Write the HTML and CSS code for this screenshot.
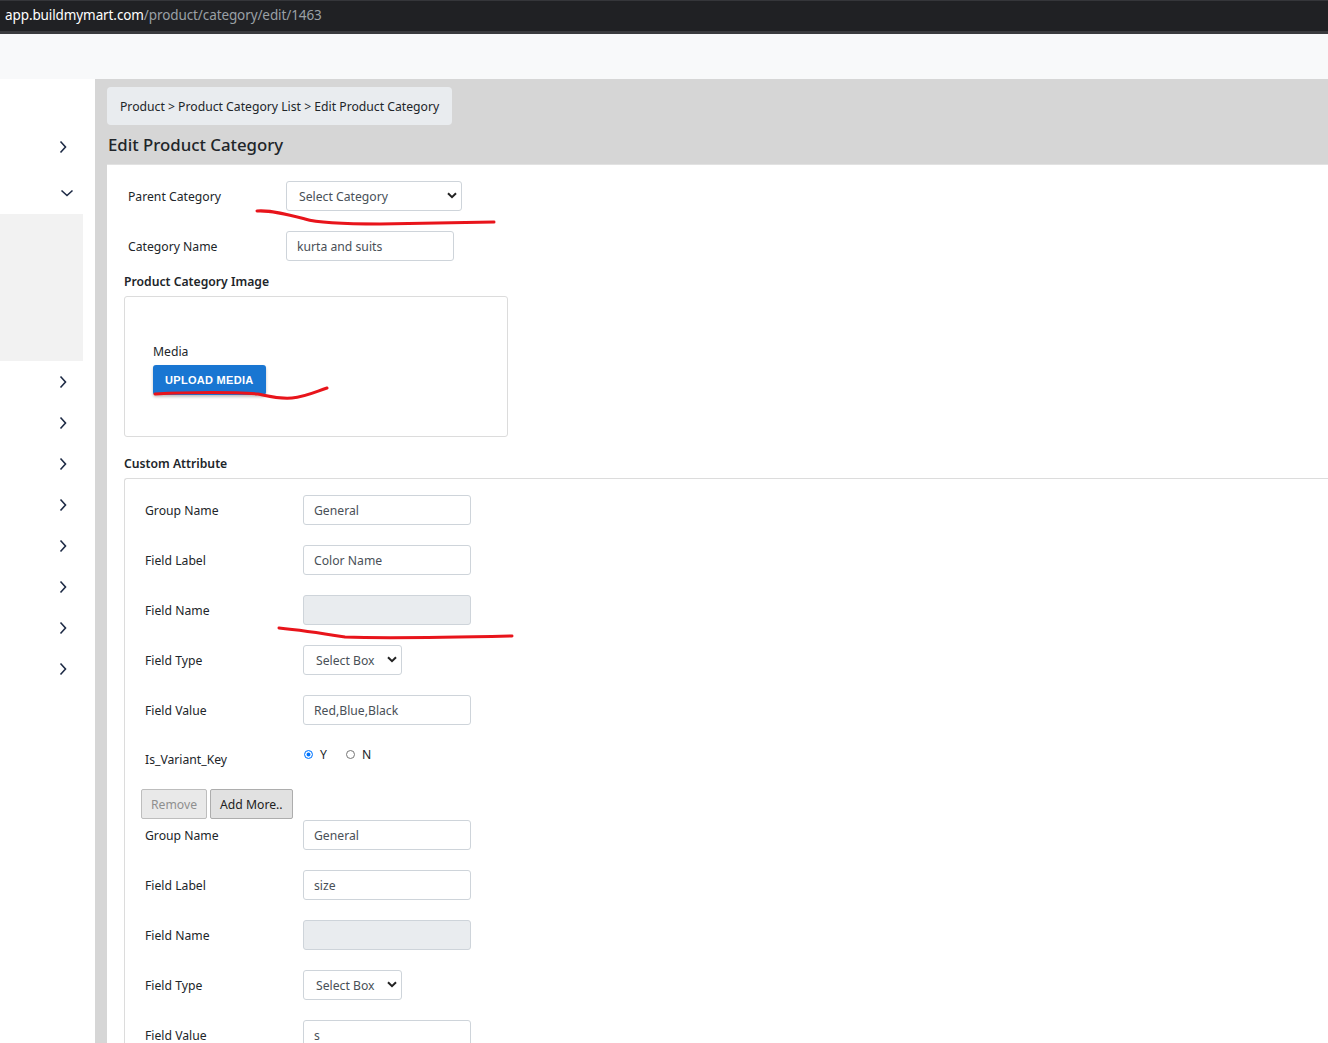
FILE: index.html
```html
<!DOCTYPE html>
<html lang="en">
<head>
    <meta charset="UTF-8">
    <meta name="viewport" content="width=device-width, initial-scale=1.0">
    <title>Edit Product Category</title>
    <link rel="stylesheet" href="styles.css">
</head>
<body>
    <div class="browser-bar">
        <span class="host">app.buildmymart.com</span><span class="path">/product/category/edit/1463</span>
    </div>
    <header class="topnav"></header>

    <div class="layout">
        <aside class="sidebar">
            <div class="menu-item"><svg class="chev" width="10" height="14" viewBox="0 0 10 14"><path d="M2.5 1.5 L7.5 7 L2.5 12.5"/></svg></div>
            <div class="menu-item open"><svg class="chev" width="14" height="10" viewBox="0 0 14 10"><path d="M1.5 2.5 L7 7.5 L12.5 2.5"/></svg></div>
            <div class="submenu"></div>
            <div class="menu-item"><svg class="chev" width="10" height="14" viewBox="0 0 10 14"><path d="M2.5 1.5 L7.5 7 L2.5 12.5"/></svg></div>
            <div class="menu-item"><svg class="chev" width="10" height="14" viewBox="0 0 10 14"><path d="M2.5 1.5 L7.5 7 L2.5 12.5"/></svg></div>
            <div class="menu-item"><svg class="chev" width="10" height="14" viewBox="0 0 10 14"><path d="M2.5 1.5 L7.5 7 L2.5 12.5"/></svg></div>
            <div class="menu-item"><svg class="chev" width="10" height="14" viewBox="0 0 10 14"><path d="M2.5 1.5 L7.5 7 L2.5 12.5"/></svg></div>
            <div class="menu-item"><svg class="chev" width="10" height="14" viewBox="0 0 10 14"><path d="M2.5 1.5 L7.5 7 L2.5 12.5"/></svg></div>
            <div class="menu-item"><svg class="chev" width="10" height="14" viewBox="0 0 10 14"><path d="M2.5 1.5 L7.5 7 L2.5 12.5"/></svg></div>
            <div class="menu-item"><svg class="chev" width="10" height="14" viewBox="0 0 10 14"><path d="M2.5 1.5 L7.5 7 L2.5 12.5"/></svg></div>
            <div class="menu-item"><svg class="chev" width="10" height="14" viewBox="0 0 10 14"><path d="M2.5 1.5 L7.5 7 L2.5 12.5"/></svg></div>
        </aside>

        <main class="main">
            <div class="page-head">
                <nav class="crumbs">Product &gt; Product Category List &gt; Edit Product Category</nav>
                <h1>Edit Product Category</h1>
            </div>

            <div class="content">
                <form>
                    <div class="form-row">
                        <label>Parent Category</label>
                        <div class="select-wrap wide">
                            <select><option>Select Category</option></select>
                            <svg class="select-arrow" width="10" height="7" viewBox="0 0 10 7"><path d="M1 1.2 L5 5.2 L9 1.2"/></svg>
                        </div>
                    </div>
                    <div class="form-row last">
                        <label>Category Name</label>
                        <input type="text" class="name-input" value="kurta and suits">
                    </div>

                    <h3 class="section-title">Product Category Image</h3>
                    <div class="media-box">
                        <div class="media-label">Media</div>
                        <button type="button" class="btn-upload">UPLOAD MEDIA</button>
                    </div>

                    <h3 class="section-title attr-title">Custom Attribute</h3>
                    <div class="attr-box">
                        <div class="attr-row">
                            <label>Group Name</label>
                            <input type="text" value="General">
                        </div>
                        <div class="attr-row">
                            <label>Field Label</label>
                            <input type="text" value="Color Name">
                        </div>
                        <div class="attr-row">
                            <label>Field Name</label>
                            <input type="text" disabled>
                        </div>
                        <div class="attr-row">
                            <label>Field Type</label>
                            <div class="select-wrap small">
                                <select><option>Select Box</option></select>
                                <svg class="select-arrow" width="10" height="7" viewBox="0 0 10 7"><path d="M1 1.2 L5 5.2 L9 1.2"/></svg>
                            </div>
                        </div>
                        <div class="attr-row">
                            <label>Field Value</label>
                            <input type="text" value="Red,Blue,Black">
                        </div>
                        <div class="attr-row radio-row">
                            <label>Is_Variant_Key</label>
                            <div class="radios">
                                <span class="radio checked"></span><span class="radio-text">Y</span>
                                <span class="radio"></span><span class="radio-text">N</span>
                            </div>
                        </div>
                        <div class="attr-actions">
                            <button type="button" class="btn-gray" disabled>Remove</button>
                            <button type="button" class="btn-gray btn-more">Add More..</button>
                        </div>

                        <div class="attr-row">
                            <label>Group Name</label>
                            <input type="text" value="General">
                        </div>
                        <div class="attr-row">
                            <label>Field Label</label>
                            <input type="text" value="size">
                        </div>
                        <div class="attr-row">
                            <label>Field Name</label>
                            <input type="text" disabled>
                        </div>
                        <div class="attr-row">
                            <label>Field Type</label>
                            <div class="select-wrap small">
                                <select><option>Select Box</option></select>
                                <svg class="select-arrow" width="10" height="7" viewBox="0 0 10 7"><path d="M1 1.2 L5 5.2 L9 1.2"/></svg>
                            </div>
                        </div>
                        <div class="attr-row">
                            <label>Field Value</label>
                            <input type="text" value="s">
                        </div>
                    </div>
                </form>
            </div>
        </main>
    </div>

    <!-- red pen marks drawn over the screenshot -->
    <svg class="marks" width="1328" height="1043" viewBox="0 0 1328 1043">
        <path d="M257 211 C 272 210, 290 215, 305 219 C 318 223, 340 224, 380 224 L 494 222"/>
        <path d="M155 394 C 190 392, 235 392, 258 394 C 268 396, 276 399, 292 398 C 305 397, 315 392, 327 388"/>
        <path d="M279 628 C 300 630, 320 633, 345 637 C 370 638, 420 638, 512 636"/>
    </svg>
</body>
</html>
```

FILE: styles.css
```css
body {
    margin: 0;
    font-family: "Noto Sans", "Open Sans", sans-serif;
    font-size: 12.2px;
    color: #212529;
    background: #ffffff;
    width: 1328px;
    height: 1043px;
    overflow: hidden;
    position: relative;
}

.browser-bar {
    height: 34px;
    background: #202124;
    border-top: 1px solid #35363a;
    border-bottom: 3px solid #3a3b3e;
    box-sizing: border-box;
    display: flex;
    align-items: center;
    padding: 0 0 3px 5px;
    font-size: 13.5px;
    letter-spacing: -0.1px;
}

.host {
    color: #ffffff;
}

.path {
    color: #9aa0a6;
}

.topnav {
    height: 45px;
    background: #f8f9fa;
}

.layout {
    display: flex;
    min-height: 964px;
}

.sidebar {
    width: 95px;
    flex-shrink: 0;
    background: #ffffff;
    padding-top: 47px;
}

.menu-item {
    height: 41px;
    display: flex;
    align-items: center;
    padding-left: 58px;
}

.menu-item.open {
    height: 47px;
    padding-left: 60px;
    padding-top: 4px;
    box-sizing: border-box;
}

.chev path {
    fill: none;
    stroke: #1d2a45;
    stroke-width: 1.6;
}

.submenu {
    width: 83px;
    height: 147px;
    background: #f2f2f2;
}

.main {
    flex: 1;
    background: #d6d6d6;
    padding-left: 12px;
    display: flex;
    flex-direction: column;
}

.page-head {
    flex-shrink: 0;
    padding-top: 8px;
    height: 86px;
    box-sizing: border-box;
    border-bottom: 1px solid #e2e2e2;
}

.crumbs {
    display: inline-block;
    background: #e9ecef;
    border-radius: 4px;
    padding: 0 13px;
    height: 38px;
    line-height: 39px;
    color: #212529;
}

h1 {
    margin: 7px 0 0 1px;
    font-size: 16.8px;
    font-weight: 500;
    line-height: 26px;
    color: #212529;
}

.content {
    flex: 1;
    background: #ffffff;
    padding: 16px 0 0 17px;
}

.form-row {
    display: flex;
    align-items: center;
    margin-bottom: 20px;
    padding-left: 4px;
}

.form-row.last {
    margin-bottom: 12px;
}

.form-row label,
.attr-row label {
    width: 158px;
    flex-shrink: 0;
}

input[type="text"],
select {
    height: 30px;
    box-sizing: border-box;
    border: 1px solid #ced4da;
    border-radius: 3px;
    background: #ffffff;
    font-family: inherit;
    font-size: 12.2px;
    color: #495057;
    padding: 0 10px;
    outline: none;
}

input[type="text"]:disabled {
    background: #e9ecef;
}

.name-input {
    width: 168px;
}

.select-wrap {
    position: relative;
}

.select-wrap select {
    appearance: none;
    -webkit-appearance: none;
    width: 100%;
    padding-left: 12px;
}

.select-wrap.wide {
    width: 176px;
}

.select-wrap.small {
    width: 99px;
}

.select-arrow {
    position: absolute;
    right: 5px;
    top: 11px;
    pointer-events: none;
}

.select-arrow path {
    fill: none;
    stroke: #222;
    stroke-width: 2;
}

.section-title {
    margin: 0 0 5px;
    font-size: 12.2px;
    font-weight: 600;
    line-height: 18px;
}

.media-box {
    width: 384px;
    height: 141px;
    box-sizing: border-box;
    border: 1px solid #dcdcdc;
    border-radius: 3px;
    padding: 45px 28px 0;
}

.media-label {
    line-height: 20px;
    margin-bottom: 3px;
}

.btn-upload {
    height: 30px;
    padding: 0 12px;
    border: none;
    border-radius: 3px;
    background: #1976d2;
    color: #ffffff;
    font-family: "Liberation Sans", Arial, sans-serif;
    font-weight: bold;
    font-size: 11px;
    letter-spacing: 0.3px;
    box-shadow: 0 2px 3px rgba(0, 0, 0, 0.25);
}

.attr-title {
    margin-top: 18px;
    margin-bottom: 5px;
}

.attr-box {
    border: 1px solid #dcdcdc;
    border-right: none;
    border-bottom: none;
    border-radius: 3px 0 0 0;
    padding: 16px 0 0 16px;
}

.attr-row {
    display: flex;
    align-items: center;
    margin-bottom: 20px;
    padding-left: 4px;
}

.attr-row input[type="text"] {
    width: 168px;
}

.radio-row {
    align-items: flex-start;
    height: 24px;
}

.radio-row label {
    padding-top: 6px;
}

.radios {
    display: flex;
    align-items: center;
    margin-top: 1px;
}

.radio {
    width: 9px;
    height: 9px;
    border: 1px solid #767676;
    border-radius: 50%;
    box-sizing: border-box;
    margin-left: 1px;
}

.radio.checked {
    border: 1px solid #0075ff;
    background: #ffffff;
    box-shadow: inset 0 0 0 1.5px #ffffff, inset 0 0 0 5px #0075ff;
}

.radio-text {
    margin: 0 18px 0 7px;
}

.attr-actions {
    display: flex;
    gap: 3px;
    margin-bottom: 1px;
}

.btn-gray {
    height: 30px;
    padding: 0 9px;
    font-family: inherit;
    font-size: 12.2px;
    border-radius: 2px;
    border: 1px solid #bdbdbd;
    background: #e9e9e9;
    color: #8f8f8f;
}

.btn-more {
    background: #e1e1e1;
    border-color: #adadad;
    color: #222;
}

.marks {
    position: absolute;
    top: 0;
    left: 0;
    pointer-events: none;
}

.marks path {
    fill: none;
    stroke: #e8141b;
    stroke-width: 3;
    stroke-linecap: round;
}
```
